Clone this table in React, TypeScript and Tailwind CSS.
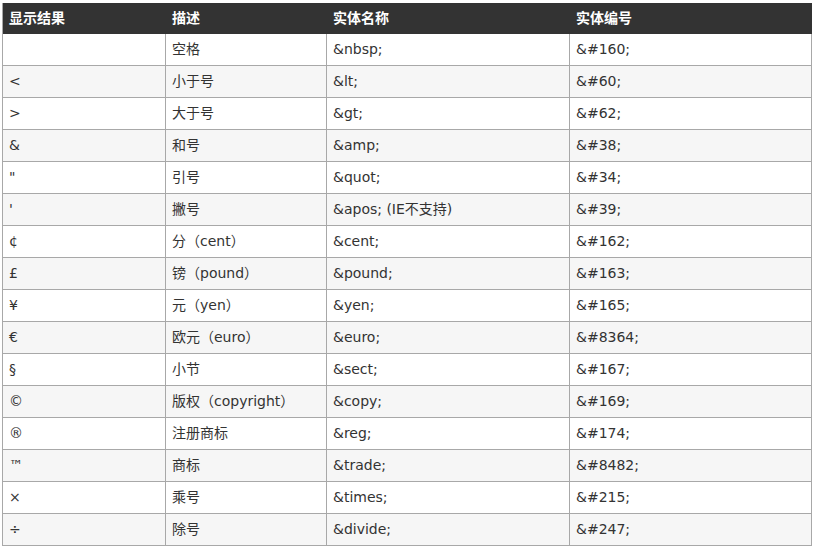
const rows: [string, string, string, string][] = [
  ['', '空格', '&nbsp;', '&#160;'],
  ['<', '小于号', '&lt;', '&#60;'],
  ['>', '大于号', '&gt;', '&#62;'],
  ['&', '和号', '&amp;', '&#38;'],
  ['"', '引号', '&quot;', '&#34;'],
  ["'", '撇号', '&apos; (IE不支持)', '&#39;'],
  ['¢', '分（cent）', '&cent;', '&#162;'],
  ['£', '镑（pound）', '&pound;', '&#163;'],
  ['¥', '元（yen）', '&yen;', '&#165;'],
  ['€', '欧元（euro）', '&euro;', '&#8364;'],
  ['§', '小节', '&sect;', '&#167;'],
  ['©', '版权（copyright）', '&copy;', '&#169;'],
  ['®', '注册商标', '&reg;', '&#174;'],
  ['™', '商标', '&trade;', '&#8482;'],
  ['×', '乘号', '&times;', '&#215;'],
  ['÷', '除号', '&divide;', '&#247;'],
];

const headers = ['显示结果', '描述', '实体名称', '实体编号'];
const cols = 'grid grid-cols-[163px_161px_243px_242px]';

export default function App() {
  return (
    <div
      className="w-[815px] h-[550px] bg-white pt-[3px] pl-[2px] text-[14px] text-[#333]"
      style={{ fontFamily: '"DejaVu Sans", "Noto Sans CJK SC", sans-serif' }}
    >
      <div className="w-[810px] border-l border-[#a8a8a8]">
        <div className={`${cols} h-[31px] bg-[#333] text-white font-bold`}>
          {headers.map((h) => (
            <div key={h} className="flex items-center px-[6px] border-r border-[#333]">
              {h}
            </div>
          ))}
        </div>
        {rows.map((r, i) => (
          <div
            key={i}
            className={`${cols} h-[32px] border-b border-[#a8a8a8] ${i % 2 === 1 ? 'bg-[#f6f6f6]' : 'bg-white'}`}
          >
            {r.map((c, j) => (
              <div key={j} className="flex items-center px-[6px] border-r border-[#a8a8a8] whitespace-nowrap">
                {c}
              </div>
            ))}
          </div>
        ))}
      </div>
    </div>
  );
}
